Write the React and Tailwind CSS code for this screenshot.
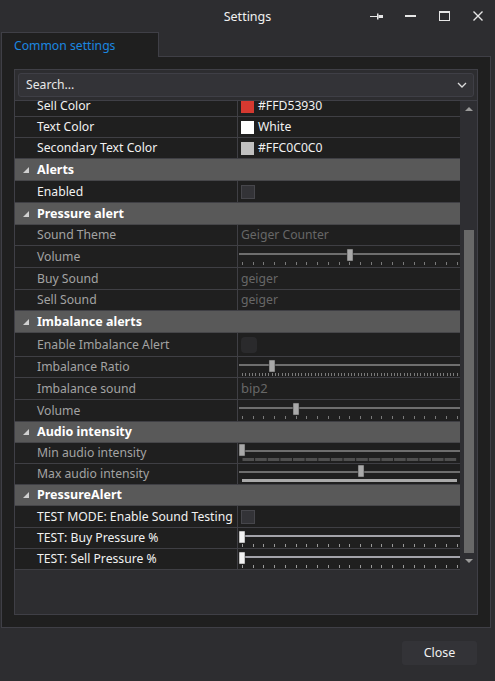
import React from 'react';

const FONT = "font-['Noto_Sans','Open_Sans',sans-serif]";

const rows = [
  { name: 'Sell Color', h: 21, v: { kind: 'color', c: '#d53930', text: '#FFD53930' } },
  { name: 'Text Color', h: 21, v: { kind: 'color', c: '#ffffff', text: 'White' } },
  { name: 'Secondary Text Color', h: 21, v: { kind: 'color', c: '#c0c0c0', text: '#FFC0C0C0' } },
  { cat: 'Alerts', h: 22 },
  { name: 'Enabled', h: 22, v: { kind: 'check' } },
  { cat: 'Pressure alert', h: 22 },
  { name: 'Sound Theme', h: 21, dis: true, v: { kind: 'text', text: 'Geiger Counter' } },
  { name: 'Volume', h: 22, dis: true, v: { kind: 'slider', pos: 109, ticks: 20 } },
  { name: 'Buy Sound', h: 22, dis: true, v: { kind: 'text', text: 'geiger' } },
  { name: 'Sell Sound', h: 21, dis: true, v: { kind: 'text', text: 'geiger' } },
  { cat: 'Imbalance alerts', h: 22 },
  { name: 'Enable Imbalance Alert', h: 24, dis: true, v: { kind: 'round' } },
  { name: 'Imbalance Ratio', h: 21, dis: true, v: { kind: 'slider', pos: 31, ticks: 65 } },
  { name: 'Imbalance sound', h: 22, dis: true, v: { kind: 'text', text: 'bip2', big: true } },
  { name: 'Volume', h: 22, dis: true, v: { kind: 'slider', pos: 55, ticks: 20 } },
  { cat: 'Audio intensity', h: 21 },
  { name: 'Min audio intensity', h: 21, dis: true, v: { kind: 'slider', pos: 1, seg: true, top: 1 } },
  { name: 'Max audio intensity', h: 21, dis: true, v: { kind: 'slider', pos: 120, bar: true, top: 1 } },
  { cat: 'PressureAlert', h: 21 },
  { name: 'TEST MODE: Enable Sound Testing', h: 22, v: { kind: 'check' } },
  { name: 'TEST: Buy Pressure %', h: 21, v: { kind: 'slider', pos: 1, ticks: 20, on: true } },
  { name: 'TEST: Sell Pressure %', h: 21, v: { kind: 'slider', pos: 1, ticks: 20, on: true } },
];

function Slider({ pos, ticks, seg, bar, on, top = 3 }) {
  const track = on ? '#a3a3aa' : '#6e6e6e';
  const thumb = on ? '#f2f2f2' : '#a9a9a9';
  const tick = on ? '#9a9a9a' : '#7a7a7a';
  const marks = [];
  if (ticks) {
    for (let i = 0; i <= ticks; i++) {
      const x = Math.round(4 + (i * 214.5) / ticks);
      marks.push(<rect key={i} x={x} y={16} width={1} height={3} fill={tick} />);
    }
  }
  if (seg) {
    for (let i = 0; i < 17; i++) {
      const x = 4.5 + i * 12.63;
      marks.push(<rect key={i} x={x} y={15} width={11.6} height={3} fill="#4f4f4f" />);
    }
  }
  if (bar) marks.push(<rect key="b" x={4} y={15} width={215} height={3} fill="#a9a9a9" />);
  return (
    <svg width="222" height="20" className="block">
      <rect x={1} y={7} width={221} height={2} fill={track} />
      {marks}
      <rect x={pos} y={top} width={6} height={12} fill={thumb} stroke="#2a2a2a" strokeWidth="0.5" />
    </svg>
  );
}

function Value({ v }) {
  if (v.kind === 'color')
    return (
      <div className="flex items-center h-full pl-[3px] gap-[4px] text-[#f1f1f1]">
        <span className="w-[13px] h-[13px] block" style={{ background: v.c }} />
        <span className="pt-[1px]">{v.text}</span>
      </div>
    );
  if (v.kind === 'check')
    return (
      <div className="flex items-center h-full pl-[3px]">
        <span className="w-[14px] h-[14px] block bg-[#333337] border border-[#46464b]" />
      </div>
    );
  if (v.kind === 'round')
    return (
      <div className="flex items-center h-full pl-[3px]">
        <span className="w-[16px] h-[16px] block rounded-[4px] bg-[#2a2a2c]" />
      </div>
    );
  if (v.kind === 'text')
    return (
      <div className={`flex items-center h-full pl-[3px] pt-[1px] text-[#676767] ${v.big ? 'text-[13px]' : ''}`}>
        {v.text}
      </div>
    );
  return (
    <div className="h-full">
      <Slider {...v} />
    </div>
  );
}

function Row({ r }) {
  if (r.cat)
    return (
      <div style={{ height: r.h }} className="shrink-0 flex items-center bg-[#595959] border-b border-[#464649]">
        <div className="w-[22px] flex justify-end pr-[8px]">
          <svg width="6" height="6" viewBox="0 0 6 6"><path d="M6 0 L6 6 L0 6 Z" fill="#d0d0d0" /></svg>
        </div>
        <span className="font-bold text-white text-[12.5px] pt-[1px]">{r.cat}</span>
      </div>
    );
  return (
    <div style={{ height: r.h }} className="shrink-0 flex bg-[#1f1f1f] border-b border-[#3f3f44]">
      <div className={`w-[222px] shrink-0 flex items-center pl-[22px] pt-[1px] whitespace-nowrap overflow-hidden ${r.dis ? 'text-[#a3a3a3]' : 'text-[#f1f1f1]'}`}>
        {r.name}
      </div>
      <div className="w-[1px] bg-[#3f3f44]" />
      <div className="flex-1 overflow-hidden">
        <Value v={r.v} />
      </div>
    </div>
  );
}

export default function App() {
  return (
    <div className={`w-[495px] h-[681px] bg-[#2d2d30] text-[12.2px] text-[#f1f1f1] flex flex-col overflow-hidden ${FONT}`}>
      {/* title bar */}
      <div className="h-[32px] shrink-0 relative flex items-center justify-center pt-[2px]">
        <span className="text-[12.5px] text-[#f1f1f1]">Settings</span>
        <div className="absolute right-0 top-0 h-[32px] flex items-center">
          <div className="w-[34px] flex justify-center">
            <svg width="13" height="7" viewBox="0 0 13 7">
              <rect x="0" y="3" width="7" height="1" fill="#e6e6e6" />
              <rect x="7" y="0.5" width="1.5" height="6" fill="#e6e6e6" />
              <rect x="8.5" y="2" width="4.5" height="3" fill="#e6e6e6" />
            </svg>
          </div>
          <div className="w-[34px] flex justify-center">
            <svg width="11" height="10" viewBox="0 0 11 10"><rect x="0" y="4" width="11" height="2" fill="#e6e6e6" /></svg>
          </div>
          <div className="w-[34px] flex justify-center">
            <svg width="11" height="10" viewBox="0 0 11 10">
              <rect x="0.5" y="0.5" width="10" height="9" fill="none" stroke="#e6e6e6" />
              <rect x="0" y="0" width="11" height="2" fill="#e6e6e6" />
            </svg>
          </div>
          <div className="w-[34px] flex justify-center">
            <svg width="10" height="10" viewBox="0 0 10 10">
              <path d="M0.5 0.5 L9.5 9.5 M9.5 0.5 L0.5 9.5" stroke="#e6e6e6" strokeWidth="1.4" />
            </svg>
          </div>
        </div>
      </div>

      {/* tab header */}
      <div className="pl-[1px] h-[24px] shrink-0 flex">
        <div className="w-[158px] h-[25px] bg-[#1f1f1f] border border-b-0 border-[#3f3f46] flex items-center pl-[12px] pt-[2px] text-[#1b87e0] relative z-10">
          Common settings
        </div>
      </div>

      {/* tab content */}
      <div className="ml-[1px] w-[490px] h-[572px] shrink-0 bg-[#1f1f1f] border border-[#3f3f46] p-[12px]">
        <div className="h-full border border-[#3f3f46] bg-[#2d2d30] flex flex-col">
          <div className="p-[3px] shrink-0">
            <div className="h-[24px] rounded-[3px] bg-[#333337] border border-[#3f3f46] flex items-center justify-between pl-[7px] pr-[6px] text-[#e8e8e8]">
              <span className="pt-[1px]">Search...</span>
              <svg width="10" height="6" viewBox="0 0 10 6"><path d="M1 1 L5 5 L9 1" fill="none" stroke="#dcdcdc" strokeWidth="1.3" /></svg>
            </div>
          </div>
          <div className="h-[470px] shrink-0 flex border-t border-[#3f3f46]">
            <div className="w-[445px] overflow-hidden">
              <div className="flex flex-col mt-[-5px]">
                {rows.map((r, i) => <Row key={i} r={r} />)}
              </div>
            </div>
            <div className="flex-1 bg-[#2e2e32] flex flex-col items-start pl-[4px]">
              <div className="h-[16px] w-[10px] flex items-center justify-center">
                <svg width="8" height="4" viewBox="0 0 8 4"><path d="M0 4 L4 0 L8 4 Z" fill="#9a9a9a" /></svg>
              </div>
              <div className="w-[10px] h-[323px] mt-[113px] bg-[#686868]" />
              <div className="h-[16px] w-[10px] flex items-center justify-center">
                <svg width="8" height="4" viewBox="0 0 8 4"><path d="M0 0 L8 0 L4 4 Z" fill="#9a9a9a" /></svg>
              </div>
            </div>
          </div>
          <div className="flex-1" />
        </div>
      </div>

      {/* footer */}
      <div className="flex-1 flex justify-end items-start pt-[13px] pr-[18px]">
        <button className="w-[75px] h-[24px] rounded-[3px] bg-[#333337] text-[#f1f1f1] text-[12.5px] pt-[1px]">Close</button>
      </div>
    </div>
  );
}
